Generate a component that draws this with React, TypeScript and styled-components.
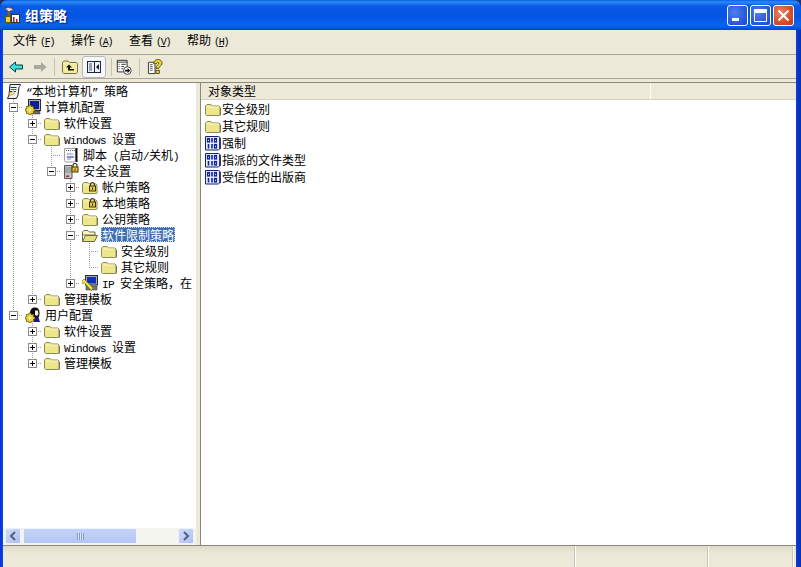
import React from "react";
import styled, { createGlobalStyle } from "styled-components";

const Global = createGlobalStyle`
  html, body { margin: 0; padding: 0; background: #1c2f7c; }
  body { font-family: "Noto Sans CJK SC", "Liberation Sans", sans-serif; font-size: 12px; color: #000; }
`;

const Frame = styled.div`
  width: 801px;
  height: 567px;
  overflow: hidden;
  background: #20306e;
`;
const Win = styled.div`
  height: 567px;
  display: flex;
  flex-direction: column;
  border-radius: 8px 8px 0 0;
  overflow: hidden;
  background: linear-gradient(to right, #0831d9 0, #0a49e0 3px, #0a49e0 796px, #0a36c8 797px, #0831b8 800px);
`;
const TitleBar = styled.div`
  height: 30px;
  flex: none;
  box-sizing: border-box;
  display: flex;
  align-items: center;
  padding: 0 7px 0 4px;
  background: linear-gradient(to bottom, #0a5fe4 0, #2a8cf6 2px, #0a5ae6 6px, #0454e4 16px, #0a62ee 25px, #0558e4 28px, #0340c8 30px);
`;
const TitleText = styled.span`
  margin-left: 5px;
  flex: 1;
  color: #fff;
  font-size: 14px;
  font-weight: 700;
  line-height: 16px;
  text-shadow: 1px 1px 1px #0a1f80;
`;
const Caption = styled.div<{ $close?: boolean }>`
  width: 21px;
  height: 21px;
  box-sizing: border-box;
  margin-left: 2px;
  border: 1px solid #fff;
  border-radius: 3px;
  display: flex;
  align-items: center;
  justify-content: center;
  background: ${p => p.$close
    ? "radial-gradient(circle at 35% 35%, #e8876a, #d8502c 55%, #b93a1c)"
    : "radial-gradient(circle at 35% 35%, #4f80ee, #2b5fdc 55%, #1f49c4)"};
`;
const Client = styled.div`
  flex: 1;
  min-height: 0;
  margin: 0 5px 0 3px;
  display: flex;
  flex-direction: column;
  background: #ece9d8;
`;
const MenuBar = styled.div`
  height: 25px;
  flex: none;
  box-sizing: border-box;
  display: flex;
  align-items: center;
  padding: 0 0 2px 10px;
  border-bottom: 1px solid #aca899;
`;
const MenuItem = styled.span`
  width: 58px;
  line-height: 16px;
  white-space: nowrap;
`;
const MenuKey = styled.span`
  margin-left: 3px;
  font-family: "Liberation Mono", monospace;
  font-size: 10px;
  letter-spacing: -1.300px;
`;
const Latin = styled.span`
  font-family: "Liberation Mono", monospace;
  font-size: 11px;
  letter-spacing: -0.6px;
  white-space: pre;
`;
const Mnemonic = styled.span`
  text-decoration: underline;
`;
const ToolBar = styled.div`
  height: 24px;
  flex: none;
  box-sizing: border-box;
  display: flex;
  align-items: center;
  padding-left: 1px;
  border-bottom: 1px solid #aca899;
`;
const ToolButton = styled.div<{ $pressed?: boolean }>`
  width: 24px;
  height: 22px;
  box-sizing: border-box;
  display: flex;
  align-items: center;
  justify-content: center;
  border-radius: 3px;
  border: 1px solid ${p => (p.$pressed ? "#b4b8c4" : "transparent")};
  background: ${p => (p.$pressed ? "#f8f8f6" : "transparent")};
`;
const ToolDivider = styled.div<{ $left: number; $right: number }>`
  width: 1px;
  height: 18px;
  background: #c5c2b2;
  margin: 0 ${p => p.$right}px 0 ${p => p.$left}px;
`;
const Gap = styled.div`
  height: 3px;
  flex: none;
`;
const Panes = styled.div`
  flex: 1;
  min-height: 0;
  display: flex;
  border-top: 1px solid #8b8878;
  border-bottom: 1px solid #8b8878;
`;
const TreePane = styled.div`
  width: 193px;
  flex: none;
  display: flex;
  flex-direction: column;
  background: #fff;
`;
const TreeList = styled.div`
  flex: 1;
  min-height: 0;
  overflow: hidden;
`;
const TreeRowBox = styled.div`
  height: 16px;
  display: flex;
  padding-left: 1px;
  white-space: nowrap;
  overflow: hidden;
`;
const Cell = styled.div<{ $v: "none" | "full" | "half"; $h?: boolean }>`
  width: 19px;
  height: 16px;
  flex: none;
  background-repeat: no-repeat;
  background-image: ${p => {
    const layers: string[] = [];
    if (p.$v !== "none") layers.push("repeating-linear-gradient(to bottom, #9a9a9a 0 1px, transparent 1px 2px)");
    if (p.$h) layers.push("repeating-linear-gradient(to right, #9a9a9a 0 1px, transparent 1px 2px)");
    return layers.length ? layers.join(",") : "none";
  }};
  background-size: ${p => {
    const s: string[] = [];
    if (p.$v !== "none") s.push(`1px ${p.$v === "half" ? 9 : 16}px`);
    if (p.$h) s.push("10px 1px");
    return s.length ? s.join(",") : "auto";
  }};
  background-position: ${p => {
    const s: string[] = [];
    if (p.$v !== "none") s.push("9px 0");
    if (p.$h) s.push("9px 8px");
    return s.length ? s.join(",") : "0 0";
  }};
`;
const Expander = styled.div<{ $open: boolean }>`
  width: 9px;
  height: 9px;
  box-sizing: border-box;
  margin: 4px 0 0 5px;
  border: 1px solid #8a8a8a;
  background-color: #fff;
  background-repeat: no-repeat;
  background-image: linear-gradient(#000, #000), linear-gradient(#000, #000);
  background-size: 5px 1px, ${p => (p.$open ? "0 0" : "1px 5px")};
  background-position: 1px 3px, 3px 1px;
`;
const IconSlot = styled.div`
  width: 16px;
  height: 16px;
  margin-left: 2px;
  flex: none;
`;
const TreeLabel = styled.span<{ $selected?: boolean }>`
  margin-left: 3px;
  padding: 0 1px;
  height: 15px;
  line-height: 15px;
  color: ${p => (p.$selected ? "#fff" : "#000")};
  background: ${p => (p.$selected ? "#3d6eb2" : "transparent")};
  outline: ${p => (p.$selected ? "1px dotted #c9d4e6" : "none")};
  outline-offset: -1px;
`;
const HScroll = styled.div`
  height: 17px;
  flex: none;
  box-sizing: border-box;
  display: flex;
  padding: 0 2px;
  background: #f5f5ef;
`;
const ScrollBtn = styled.div`
  width: 16px;
  height: 16px;
  box-sizing: border-box;
  flex: none;
  border: 1px solid #eef2fd;
  border-radius: 2px;
  background: linear-gradient(135deg, #d2dcf8, #aebff0);
  display: flex;
  align-items: center;
  justify-content: center;
`;
const Thumb = styled.div`
  width: 114px;
  height: 16px;
  box-sizing: border-box;
  margin: 0 auto 0 2px;
  border: 1px solid #eef2fd;
  border-radius: 2px;
  background: linear-gradient(to bottom, #c4d2f8, #b4c6f4);
  display: flex;
  align-items: center;
  justify-content: center;
`;
const Grip = styled.div`
  width: 7px;
  height: 7px;
  background: repeating-linear-gradient(to right, #8298cf 0 1px, #dde6fb 1px 2px);
`;
const Splitter = styled.div`
  width: 5px;
  flex: none;
  box-sizing: border-box;
  border-right: 1px solid #8b8878;
  background: #ece9d8;
`;
const ListPane = styled.div`
  flex: 1;
  min-width: 0;
  background: #fff;
  display: flex;
  flex-direction: column;
`;
const ListHeader = styled.div`
  height: 17px;
  flex: none;
  display: flex;
  box-sizing: border-box;
  background: #ece9d8;
  border-bottom: 1px solid #d6d2c2;
`;
const HeaderCell = styled.div<{ $w?: number }>`
  width: ${p => (p.$w ? `${p.$w}px` : "auto")};
  flex: ${p => (p.$w ? "none" : "1")};
  box-sizing: border-box;
  padding-left: 7px;
  line-height: 15px;
  border-right: ${p => (p.$w ? "1px solid #fff" : "none")};
`;
const ListBody = styled.div``;
const ListRow = styled.div`
  height: 17px;
  display: flex;
  align-items: center;
  padding-left: 4px;
  gap: 1px;
  line-height: 15px;
`;
const StatusBar = styled.div`
  height: 21px;
  flex: none;
  display: flex;
  background: linear-gradient(to bottom, #dedbca 0, #ece9d8 8px);
`;
const StatusCell = styled.div<{ $w: number }>`
  width: ${p => p.$w}px;
  flex: none;
  box-sizing: border-box;
  border-right: 1px solid #fff;
  box-shadow: inset -1px 0 0 #c8c5b4;
`;
const Ico = styled.svg`
  width: 16px;
  height: 16px;
  display: block;
  flex: none;
`;

const Folder = () => (
  <Ico viewBox="0 0 16 16">
    <path d="M.5 5 2 3.500h4L7.500 5H14l1 1v8l-1 .5H1.500l-1-1z" fill="#eee68a" stroke="#8d8a5c" />
    <path d="M1.500 6h12.500" stroke="#fbf7c4" />
    <path d="M15.500 7v7.500" stroke="#77744e" />
  </Ico>
);
const FolderOpen = () => (
  <Ico viewBox="0 0 16 16">
    <path d="M.5 5 2 3.500h4L7.500 5H13v3H.5z" fill="#fbf7c4" stroke="#6c6a48" />
    <path d="M.5 5v9.500M3.500 8.500h12l-3 6H.5z" fill="#e8e07c" stroke="#6c6a48" />
  </Ico>
);
const LockBadge = ({ x, y }: { x: number; y: number }) => (
  <g transform={`translate(${x} ${y})`}>
    <path d="M1.500 4V2.500a2 2 0 0 1 4 0V4" fill="none" stroke="#3c3208" strokeWidth="1.200" />
    <rect x=".5" y="4" width="6" height="5" fill="#f0c830" stroke="#3c3208" />
    <rect x="3" y="5.500" width="1" height="2.500" fill="#3c3208" />
  </g>
);
const LockFolder = () => (
  <Ico viewBox="0 0 16 16">
    <path d="M.5 5 2 3.500h4L7.500 5H14l1 1v8l-1 .5H1.500l-1-1z" fill="#eee68a" stroke="#8d8a5c" />
    <path d="M1.500 6h12.500" stroke="#fbf7c4" />
    <LockBadge x={7} y={3} />
  </Ico>
);
const Gear = ({ x, y }: { x: number; y: number }) => (
  <g transform={`translate(${x} ${y})`}>
    <path d="M3 0h2v1.200l1.200.5L7 1l1 1-.7.9.5 1.100H9v2H7.800l-.5 1.100.7.9-1 1-.8-.7-1.200.5V10H3V8.800l-1.200-.5L1 9 0 8l.7-.9L.2 6H-1V4H.2l.5-1.100L0 2l1-1 .8.7L3 1.200z" fill="#e8d23a" stroke="#5a4a06" strokeWidth=".7" />
    <circle cx="4" cy="5" r="1.200" fill="#fff6b0" />
  </g>
);
const ComputerCfg = () => (
  <Ico viewBox="0 0 16 16">
    <rect x="3.500" y=".5" width="12" height="11" fill="#b8b6b0" stroke="#2c2c2c" />
    <rect x="5" y="2" width="9" height="8" fill="#0c1f96" />
    <rect x="7" y="12" width="8" height="3" fill="#6e6c68" stroke="#2c2c2c" strokeWidth=".5" />
    <Gear x={1} y={6} />
  </Ico>
);
const Script = () => (
  <Ico viewBox="0 0 16 16">
    <path d="M1.500 1.500h11v12l-1 1.500h-9l-1-1.500z" fill="#fafafa" stroke="#9aa0a8" />
    <path d="M13.500 1v14" stroke="#111" strokeWidth="2" />
    <path d="M3 3.500h9" stroke="#555" strokeDasharray="1 1" />
    <path d="M4 7h6" stroke="#7d8fd0" />
    <path d="M4 10h7" stroke="#1a2c9a" />
    <path d="M4 12h4" stroke="#7d8fd0" />
  </Ico>
);
const SecuritySettings = () => (
  <Ico viewBox="0 0 16 16">
    <path d="M1.500 2.500h7.500v13H1.500z" fill="#c4c2c0" stroke="#5a5a5a" />
    <path d="M2 5h6M2 7h6M2 9h6" stroke="#8a8a88" />
    <rect x="3" y="12.500" width="3" height="1.500" fill="#c02828" />
    <LockBadge x={8.500} y={0} />
  </Ico>
);
const IpIcon = () => (
  <Ico viewBox="0 0 16 16">
    <rect x="3.500" y=".5" width="12" height="9.500" fill="#a8a8b0" stroke="#2c2c2c" />
    <rect x="5" y="2" width="9" height="6.500" fill="#1030b8" />
    <rect x="4" y="11" width="11" height="4" fill="#77777a" stroke="#2c2c2c" strokeWidth=".5" />
    <path d="M0 6l2-2 2 2 7 7-1.500 2.500-7-7.500-2.500.5z" fill="#f4e83a" stroke="#5a5008" strokeWidth=".5" />
  </Ico>
);
const UserCfg = () => (
  <Ico viewBox="0 0 16 16">
    <path d="M5 6c0-3.500 2-5.500 5-5.500s4.500 2 4.500 5c0 3-.5 4.500-1.500 5.500H7C6 10 5 8 5 6z" fill="#0a0a0a" />
    <path d="M10 3.500h3l.5 3.500-1.500 2-2-1z" fill="#f4f0ee" />
    <path d="M7.500 10.500h6l1.500 4.500H9z" fill="#101c8a" />
    <Gear x={1} y={6} />
  </Ico>
);
const RootIcon = () => (
  <Ico viewBox="0 0 16 16">
    <path d="M4 1.500h10.500c0 1-1 2-1.500 2.500l-1 8-1.500 3.500H1.500L3 12z" fill="#f6f6ee" stroke="#222" />
    <path d="M4.500 4.500h6" stroke="#1a2ca8" />
    <path d="M4.500 6.500h6" stroke="#2c6ec8" />
    <path d="M4 8.500h6" stroke="#1a2ca8" />
    <path d="M2.500 11 8 8M3 13l6-3" stroke="#d8b414" strokeWidth="1.200" />
  </Ico>
);
const BlueDoc = () => (
  <Ico viewBox="0 0 16 16">
    <path d="M.5 1.500h13l1.500 1v11l-1.500 1.500H.5z" fill="#e6eeff" stroke="#142472" />
    <path d="M15 3v11" stroke="#0a1650" strokeWidth="1.400" />
    <g fill="none" stroke="#10259c" strokeWidth="1.200">
      <rect x="2.500" y="3.500" width="2" height="3.500" />
      <path d="M7 3v4.500" strokeWidth="1.600" />
      <rect x="9.500" y="3.500" width="2" height="3.500" />
      <path d="M3.500 9v4.500" strokeWidth="1.600" />
      <path d="M7 9v4.500" strokeWidth="1.600" />
      <rect x="9.500" y="9.500" width="2" height="3.500" />
    </g>
  </Ico>
);
const AppIcon = () => (
  <Ico viewBox="0 0 16 16">
    <path d="M.5 1.500l4-1 4 1 .5 2-3 .5-.5 2-2-.5v-2z" fill="#e4e4e4" stroke="#444" strokeWidth=".7" />
    <rect x="3.500" y="4" width="2.500" height="8" fill="#8a5a20" />
    <rect x="1.500" y="9.500" width="5" height="6" fill="#f0d030" stroke="#6a5806" />
    <rect x="7.500" y="7.500" width="8" height="8" fill="#fff" stroke="#333" />
    <rect x="9" y="10" width="1.500" height="5" fill="#a02020" />
    <rect x="12" y="12" width="1.500" height="3" fill="#a02020" />
  </Ico>
);
const Back = () => (
  <Ico viewBox="0 0 16 16">
    <path d="M1.500 8l6-5v3h7v4h-7v3z" fill="#38e0e0" stroke="#0a4040" />
  </Ico>
);
const Forward = () => (
  <Ico viewBox="0 0 16 16">
    <path d="M14.500 8l-5.500-5v3H2v4h7v3z" fill="#a8a89e" />
  </Ico>
);
const UpFolder = () => (
  <Ico viewBox="0 0 16 16">
    <path d="M.5 3.500 2 2h4l1.500 1.500h7l1 1v9l-1 1h-13l-1-1z" fill="#f2ebA0" stroke="#7a7440" />
    <path d="M7 5.500 4 8.500h2v3h6v-1.500H8v-1.500h2z" fill="#111" />
  </Ico>
);
const ShowTree = () => (
  <Ico viewBox="0 0 16 16">
    <rect x="1.500" y="2.500" width="13" height="11" fill="#eef0f4" stroke="#1c2748" />
    <rect x="8" y="3" width="1" height="10" fill="#1c2748" />
    <path d="M3 5h3M3 7h3M3 9h3M3 11h3" stroke="#4a5478" />
    <path d="M13 5v6L10 8z" fill="#141c38" />
  </Ico>
);
const ExportList = () => (
  <Ico viewBox="0 0 18 18">
    <path d="M1.500 1.500h11v13h-11z" fill="#fff" stroke="#222" />
    <path d="M1.500 3.500h11" stroke="#222" />
    <path d="M3 6h1M3 8.500h1M3 11h1M6 6h5M6 8.500h3M6 11h2" stroke="#222" />
    <circle cx="12.800" cy="13" r="4.300" fill="#fff" stroke="#333" />
    <path d="M10 12h3v-2l3 3-3 3v-2h-3z" fill="#111" />
  </Ico>
);
const Help = () => (
  <Ico viewBox="0 0 17 17">
    <path d="M1.500 3.500h7v12h-7z" fill="#fff" stroke="#333" />
    <path d="M3 6h3M3 8h3M3 10h3M3 12h3" stroke="#555" />
    <path d="M7 5c0-3 2.500-4.500 4.500-4.500s4.500 1 4.500 4c0 3-3.500 3-3.500 5.500h-3c0-3.500 3-3.500 3-5.500 0-1.500-2.500-1.500-2.500.5z" fill="#f2d820" stroke="#2a2a08" strokeWidth=".8" />
    <rect x="9.500" y="12" width="3.500" height="3.500" fill="#f2d820" stroke="#2a2a08" strokeWidth=".8" />
  </Ico>
);
const Chevron = ({ left }: { left?: boolean }) => (
  <svg width="8" height="10" viewBox="0 0 8 10">
    <path d={left ? "M6 1 2 5l4 4" : "M2 1l4 4-4 4"} fill="none" stroke="#4d6185" strokeWidth="2" />
  </svg>
);

type Item = {
  label: React.ReactNode;
  icon: React.ReactNode;
  guides: boolean[];
  level: number;
  exp?: "open" | "closed";
  last?: boolean;
  selected?: boolean;
};

const win = <><Latin>Windows </Latin>设置</>;

const tree: Item[] = [
  { level: 0, guides: [], icon: <RootIcon />, label: <><Latin>“</Latin>本地计算机<Latin>” </Latin>策略</> },
  { level: 1, guides: [], exp: "open", icon: <ComputerCfg />, label: "计算机配置" },
  { level: 2, guides: [true], exp: "closed", icon: <Folder />, label: "软件设置" },
  { level: 2, guides: [true], exp: "open", icon: <Folder />, label: win },
  { level: 3, guides: [true, true], icon: <Script />, label: <>脚本<Latin> (</Latin>启动<Latin>/</Latin>关机<Latin>)</Latin></> },
  { level: 3, guides: [true, true], exp: "open", last: true, icon: <SecuritySettings />, label: "安全设置" },
  { level: 4, guides: [true, true, false], exp: "closed", icon: <LockFolder />, label: "帐户策略" },
  { level: 4, guides: [true, true, false], exp: "closed", icon: <LockFolder />, label: "本地策略" },
  { level: 4, guides: [true, true, false], exp: "closed", icon: <Folder />, label: "公钥策略" },
  { level: 4, guides: [true, true, false], exp: "open", icon: <FolderOpen />, label: "软件限制策略", selected: true },
  { level: 5, guides: [true, true, false, true], icon: <Folder />, label: "安全级别" },
  { level: 5, guides: [true, true, false, true], last: true, icon: <Folder />, label: "其它规则" },
  { level: 4, guides: [true, true, false], exp: "closed", last: true, icon: <IpIcon />, label: <><Latin>IP </Latin>安全策略，在</> },
  { level: 2, guides: [true], exp: "closed", last: true, icon: <Folder />, label: "管理模板" },
  { level: 1, guides: [], exp: "open", last: true, icon: <UserCfg />, label: "用户配置" },
  { level: 2, guides: [false], exp: "closed", icon: <Folder />, label: "软件设置" },
  { level: 2, guides: [false], exp: "closed", icon: <Folder />, label: win },
  { level: 2, guides: [false], exp: "closed", last: true, icon: <Folder />, label: "管理模板" },
];

const listRows: { icon: React.ReactNode; label: string }[] = [
  { icon: <Folder />, label: "安全级别" },
  { icon: <Folder />, label: "其它规则" },
  { icon: <BlueDoc />, label: "强制" },
  { icon: <BlueDoc />, label: "指派的文件类型" },
  { icon: <BlueDoc />, label: "受信任的出版商" },
];

const menus: [string, string][] = [["文件", "F"], ["操作", "A"], ["查看", "V"], ["帮助", "H"]];

export default function App() {
  return (
    <Frame>
      <Global />
      <Win>
        <TitleBar>
          <AppIcon />
          <TitleText>组策略</TitleText>
          <Caption>
            <svg width="13" height="13" viewBox="0 0 13 13"><rect x="1" y="9" width="7" height="3" fill="#fff" /></svg>
          </Caption>
          <Caption>
            <svg width="13" height="13" viewBox="0 0 13 13"><path d="M.5 3.500h12v9H.5z" fill="none" stroke="#fff" /><rect x="0" y="0" width="13" height="3" fill="#fff" /></svg>
          </Caption>
          <Caption $close>
            <svg width="13" height="13" viewBox="0 0 13 13"><path d="M1.500 1.500l10 10M11.500 1.500l-10 10" stroke="#fff" strokeWidth="2" /></svg>
          </Caption>
        </TitleBar>
        <Client>
          <MenuBar>
            {menus.map(([t, k]) => (
              <MenuItem key={k}>{t}<MenuKey>(<Mnemonic>{k}</Mnemonic>)</MenuKey></MenuItem>
            ))}
          </MenuBar>
          <ToolBar>
            <ToolButton><Back /></ToolButton>
            <ToolButton><Forward /></ToolButton>
            <ToolDivider $left={2} $right={3} />
            <ToolButton><UpFolder /></ToolButton>
            <ToolButton $pressed><ShowTree /></ToolButton>
            <ToolDivider $left={5} $right={0} />
            <ToolButton><ExportList /></ToolButton>
            <ToolDivider $left={3} $right={3} />
            <ToolButton><Help /></ToolButton>
          </ToolBar>
          <Gap />
          <Panes>
            <TreePane>
              <TreeList>
                {tree.map((it, i) => (
                  <TreeRowBox key={i}>
                    {it.guides.map((g, j) => <Cell key={j} $v={g ? "full" : "none"} />)}
                    {it.level > 0 && (
                      <Cell $v={it.last ? "half" : "full"} $h>
                        {it.exp && <Expander $open={it.exp === "open"} />}
                      </Cell>
                    )}
                    <IconSlot>{it.icon}</IconSlot>
                    <TreeLabel $selected={it.selected}>{it.label}</TreeLabel>
                  </TreeRowBox>
                ))}
              </TreeList>
              <HScroll>
                <ScrollBtn><Chevron left /></ScrollBtn>
                <Thumb><Grip /></Thumb>
                <ScrollBtn><Chevron /></ScrollBtn>
              </HScroll>
            </TreePane>
            <Splitter />
            <ListPane>
              <ListHeader>
                <HeaderCell $w={450}>对象类型</HeaderCell>
                <HeaderCell />
              </ListHeader>
              <ListBody>
                {listRows.map(r => (
                  <ListRow key={r.label}>{r.icon}<span>{r.label}</span></ListRow>
                ))}
              </ListBody>
            </ListPane>
          </Panes>
          <StatusBar>
            <StatusCell $w={573} />
            <StatusCell $w={133} />
            <StatusCell $w={85} />
          </StatusBar>
        </Client>
      </Win>
    </Frame>
  );
}
